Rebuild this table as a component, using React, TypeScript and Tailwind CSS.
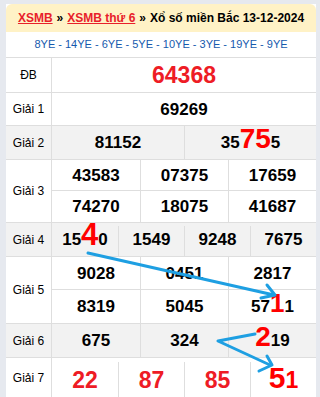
import React from "react";

function Cell({
  children,
  className = "",
  color = "text-black",
  size = "text-[17px]",
}: {
  children: React.ReactNode;
  className?: string;
  color?: string;
  size?: string;
}) {
  return (
    <div className={`flex items-center justify-center font-bold ${size} ${color} ${className}`}>
      <span className="leading-none whitespace-nowrap">{children}</span>
    </div>
  );
}

function Big({ children, size = "text-[28px]" }: { children: React.ReactNode; size?: string }) {
  return <span className={`text-[#ff0000] ${size} leading-[0]`}>{children}</span>;
}

function Label({ children }: { children: React.ReactNode }) {
  return (
    <div className="w-[45px] shrink-0 flex items-center justify-center text-[12px] text-black">
      {children}
    </div>
  );
}

export default function App() {
  const bd = "border-[#dedede]";
  const red = "text-[#ee1c25]";
  return (
    <div
      className="relative w-[320px] h-[397px] overflow-hidden bg-[#e6e9ef] pl-[6px] pr-[4px] pt-[4px]"
      style={{ fontFamily: '"Liberation Sans", Arial, sans-serif' }}
    >
      <div className="bg-white">
        {/* header */}
        <div className="h-[28px] bg-[#fff2c6] rounded-t-[6px] flex items-center justify-center text-[12px] font-bold text-black whitespace-nowrap">
          <span className="text-[#e8202a] underline">XSMB</span>
          <span className="mx-[4px]">»</span>
          <span className="text-[#e8202a] underline">XSMB thứ 6</span>
          <span className="mx-[4px]">»</span>
          <span>Xổ số miền Bắc 13-12-2024</span>
        </div>
        {/* YE */}
        <div className={`h-[26px] flex items-center justify-center text-[11px] text-[#1559ad] border-b ${bd}`}>
          8YE - 14YE - 6YE - 5YE - 10YE - 3YE - 19YE - 9YE
        </div>

        {/* ĐB */}
        <div className={`flex h-[35px] border-b ${bd}`}>
          <Label>ĐB</Label>
          <Cell className={`flex-1 border-l ${bd}`} color={red} size="text-[23px]">
            64368
          </Cell>
        </div>
        {/* G1 */}
        <div className={`flex h-[33px] border-b ${bd}`}>
          <Label>Giải 1</Label>
          <Cell className={`flex-1 border-l ${bd}`}>69269</Cell>
        </div>
        {/* G2 */}
        <div className={`flex h-[34px] border-b ${bd} bg-[#f2f2f2]`}>
          <Label>Giải 2</Label>
          <div className={`flex-1 grid grid-cols-2 border-l ${bd}`}>
            <Cell>81152</Cell>
            <Cell className={`border-l ${bd}`}>
              35<Big>75</Big>5
            </Cell>
          </div>
        </div>
        {/* G3 */}
        <div className={`flex h-[63px] border-b ${bd}`}>
          <Label>Giải 3</Label>
          <div className={`flex-1 grid grid-cols-3 grid-rows-2 border-l ${bd}`}>
            <Cell className={`border-b ${bd}`}>43583</Cell>
            <Cell className={`border-b border-l ${bd}`}>07375</Cell>
            <Cell className={`border-b border-l ${bd}`}>17659</Cell>
            <Cell>74270</Cell>
            <Cell className={`border-l ${bd}`}>18075</Cell>
            <Cell className={`border-l ${bd}`}>41687</Cell>
          </div>
        </div>
        {/* G4 */}
        <div className={`flex h-[34px] border-b ${bd} bg-[#f2f2f2]`}>
          <Label>Giải 4</Label>
          <div className={`flex-1 grid grid-cols-4 border-l ${bd} pt-[3px]`}>
            <Cell className="pb-[3px]">
              15<Big size="text-[31px]">4</Big>0
            </Cell>
            <Cell className={`border-l ${bd} pb-[3px]`}>1549</Cell>
            <Cell className={`border-l ${bd} pb-[3px]`}>9248</Cell>
            <Cell className={`border-l ${bd} pb-[3px]`}>7675</Cell>
          </div>
        </div>
        {/* G5 */}
        <div className={`flex h-[67px] border-b ${bd}`}>
          <Label>Giải 5</Label>
          <div className={`flex-1 grid grid-cols-3 grid-rows-2 border-l ${bd}`}>
            <Cell className={`border-b ${bd}`}>9028</Cell>
            <Cell className={`border-b border-l ${bd}`}>0451</Cell>
            <Cell className={`border-b border-l ${bd}`}>2817</Cell>
            <Cell>8319</Cell>
            <Cell className={`border-l ${bd}`}>5045</Cell>
            <Cell className={`border-l ${bd}`}>
              57<Big size="text-[26px]">1</Big>1
            </Cell>
          </div>
        </div>
        {/* G6 */}
        <div className={`flex h-[34px] border-b ${bd} bg-[#f2f2f2]`}>
          <Label>Giải 6</Label>
          <div className={`flex-1 grid grid-cols-3 border-l ${bd}`}>
            <Cell>675</Cell>
            <Cell className={`border-l ${bd}`}>324</Cell>
            <Cell className={`border-l ${bd}`}>
              <Big>2</Big>19
            </Cell>
          </div>
        </div>
        {/* G7 */}
        <div className="flex h-[40px]">
          <Label>Giải 7</Label>
          <div className={`flex-1 grid grid-cols-4 border-l ${bd} pt-[4px]`}>
            <Cell color={red} size="text-[23px]">22</Cell>
            <Cell className={`border-l ${bd}`} color={red} size="text-[23px]">87</Cell>
            <Cell className={`border-l ${bd}`} color={red} size="text-[23px]">85</Cell>
            <Cell className={`border-l ${bd}`} color="text-[#ff0000]" size="text-[23px]">
              <span className="text-[30px] leading-[0]">5</span>1
            </Cell>
          </div>
        </div>
      </div>

      {/* arrows overlay */}
      <svg className="absolute left-0 top-0 pointer-events-none" width="320" height="397" viewBox="0 0 320 397">
        <g stroke="#1e9fe2" strokeWidth="3" fill="none" strokeLinecap="round" strokeLinejoin="round">
          <path d="M88 253 L274 295" />
          <path d="M267 285 L275 295 L261 298" />
          <path d="M255 334 L218 341 L270 365" />
          <path d="M267 356 L272 365 L259 371" />
        </g>
      </svg>
    </div>
  );
}
